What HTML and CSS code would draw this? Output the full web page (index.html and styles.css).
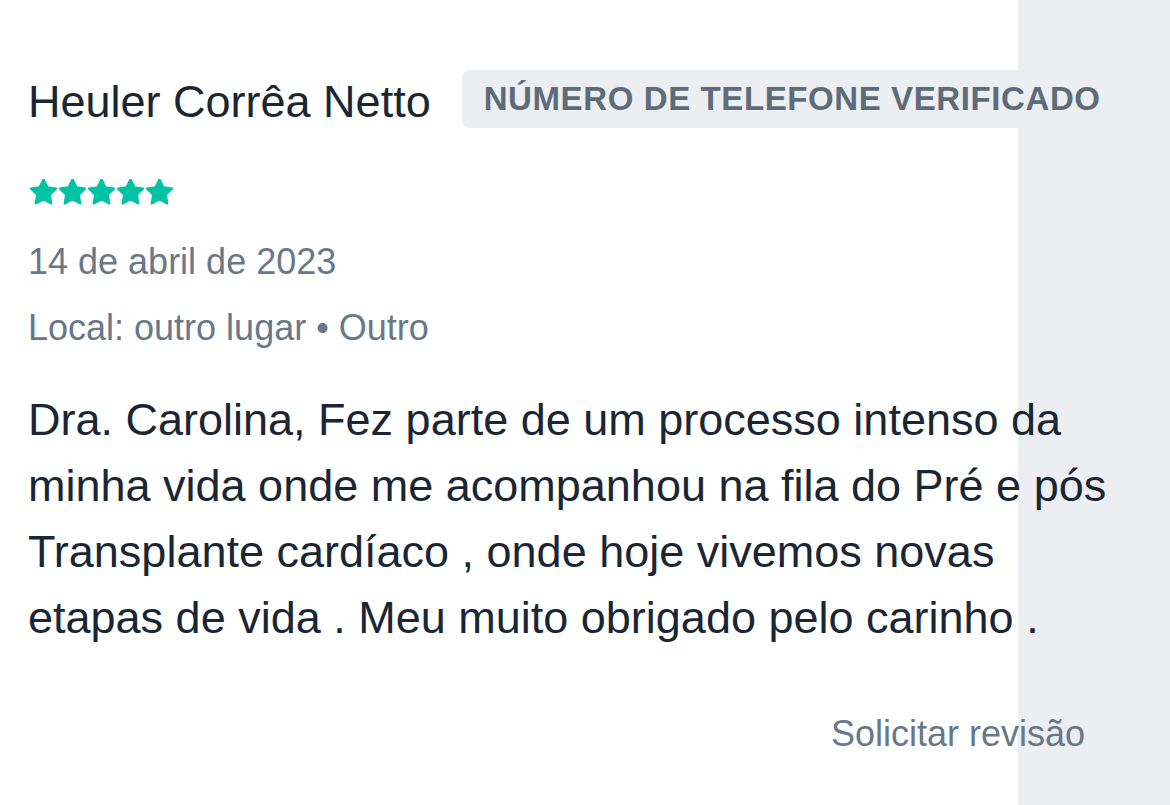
FILE: index.html
```html
<!DOCTYPE html>
<html lang="pt-BR">
<head>
<meta charset="utf-8">
<title>Opinião</title>
<link rel="stylesheet" href="styles.css">
</head>
<body>
<main class="review">
  <header class="review-head">
    <h1 class="author">Heuler Corrêa Netto</h1>
    <span class="badge">NÚMERO DE TELEFONE VERIFICADO</span>
  </header>
  <div class="stars" aria-label="5 estrelas">
    <svg class="star" viewBox="2 2.4 20 20"><path d="M12 2.6l2.9 5.9 6.5.95-4.7 4.58 1.1 6.47L12 17.45l-5.8 3.05 1.1-6.47-4.7-4.58 6.5-.95z"/></svg>
    <svg class="star" viewBox="2 2.4 20 20"><path d="M12 2.6l2.9 5.9 6.5.95-4.7 4.58 1.1 6.47L12 17.45l-5.8 3.05 1.1-6.47-4.7-4.58 6.5-.95z"/></svg>
    <svg class="star" viewBox="2 2.4 20 20"><path d="M12 2.6l2.9 5.9 6.5.95-4.7 4.58 1.1 6.47L12 17.45l-5.8 3.05 1.1-6.47-4.7-4.58 6.5-.95z"/></svg>
    <svg class="star" viewBox="2 2.4 20 20"><path d="M12 2.6l2.9 5.9 6.5.95-4.7 4.58 1.1 6.47L12 17.45l-5.8 3.05 1.1-6.47-4.7-4.58 6.5-.95z"/></svg>
    <svg class="star" viewBox="2 2.4 20 20"><path d="M12 2.6l2.9 5.9 6.5.95-4.7 4.58 1.1 6.47L12 17.45l-5.8 3.05 1.1-6.47-4.7-4.58 6.5-.95z"/></svg>
  </div>
  <p class="meta date">14 de abril de 2023</p>
  <p class="meta place">Local: outro lugar • Outro</p>
  <p class="text">Dra. Carolina, Fez parte de um processo intenso da minha vida onde me acompanhou na fila do Pré e pós Transplante cardíaco , onde hoje vivemos novas etapas de vida . Meu muito obrigado pelo carinho .</p>
  <div class="actions">
    <a class="request" href="#">Solicitar revisão</a>
  </div>
</main>
</body>
</html>
```
FILE: styles.css
```css
html, body {
  margin: 0;
  padding: 0;
}

body {
  width: 1170px;
  min-height: 805px;
  background: linear-gradient(to right, #ffffff 0, #ffffff 1018px, #eceef2 1018px, #eceef2 100%);
  font-family: "Liberation Sans", Arial, Helvetica, sans-serif;
  color: #1b2634;
  overflow: hidden;
}

.review {
  width: 1100px;
  padding: 69px 0 0 28px;
}

.review-head {
  display: flex;
  align-items: center;
  gap: 31px;
}

.author {
  margin: 0;
  padding-top: 7px;
  font-size: 45px;
  font-weight: 400;
  line-height: 52px;
  color: #1b2634;
  white-space: nowrap;
}

.badge {
  display: flex;
  align-items: center;
  height: 58px;
  padding: 0 22px;
  border-radius: 8px;
  background: #eceef2;
  color: #5e6b7b;
  font-size: 33px;
  font-weight: 700;
  letter-spacing: 0.6px;
  white-space: nowrap;
}

.stars {
  display: flex;
  gap: 2px;
  margin: 51px 0 0 2px;
  height: 27px;
}

.star {
  width: 27px;
  height: 27px;
}

.star path {
  fill: #00c3a5;
  stroke: #00c3a5;
  stroke-width: 1.6;
  stroke-linejoin: round;
}

.meta {
  margin: 0;
  font-size: 36px;
  line-height: 44px;
  color: #687789;
}

.date {
  margin-top: 34px;
}

.place {
  margin-top: 22px;
}

.text {
  margin: 37px 0 0;
  font-size: 45px;
  line-height: 66px;
  color: #1b2634;
}

.actions {
  display: flex;
  justify-content: flex-end;
  margin-top: 61px;
  padding-right: 43px;
}

.request {
  font-size: 36px;
  line-height: 44px;
  color: #687789;
  text-decoration: none;
}
```
